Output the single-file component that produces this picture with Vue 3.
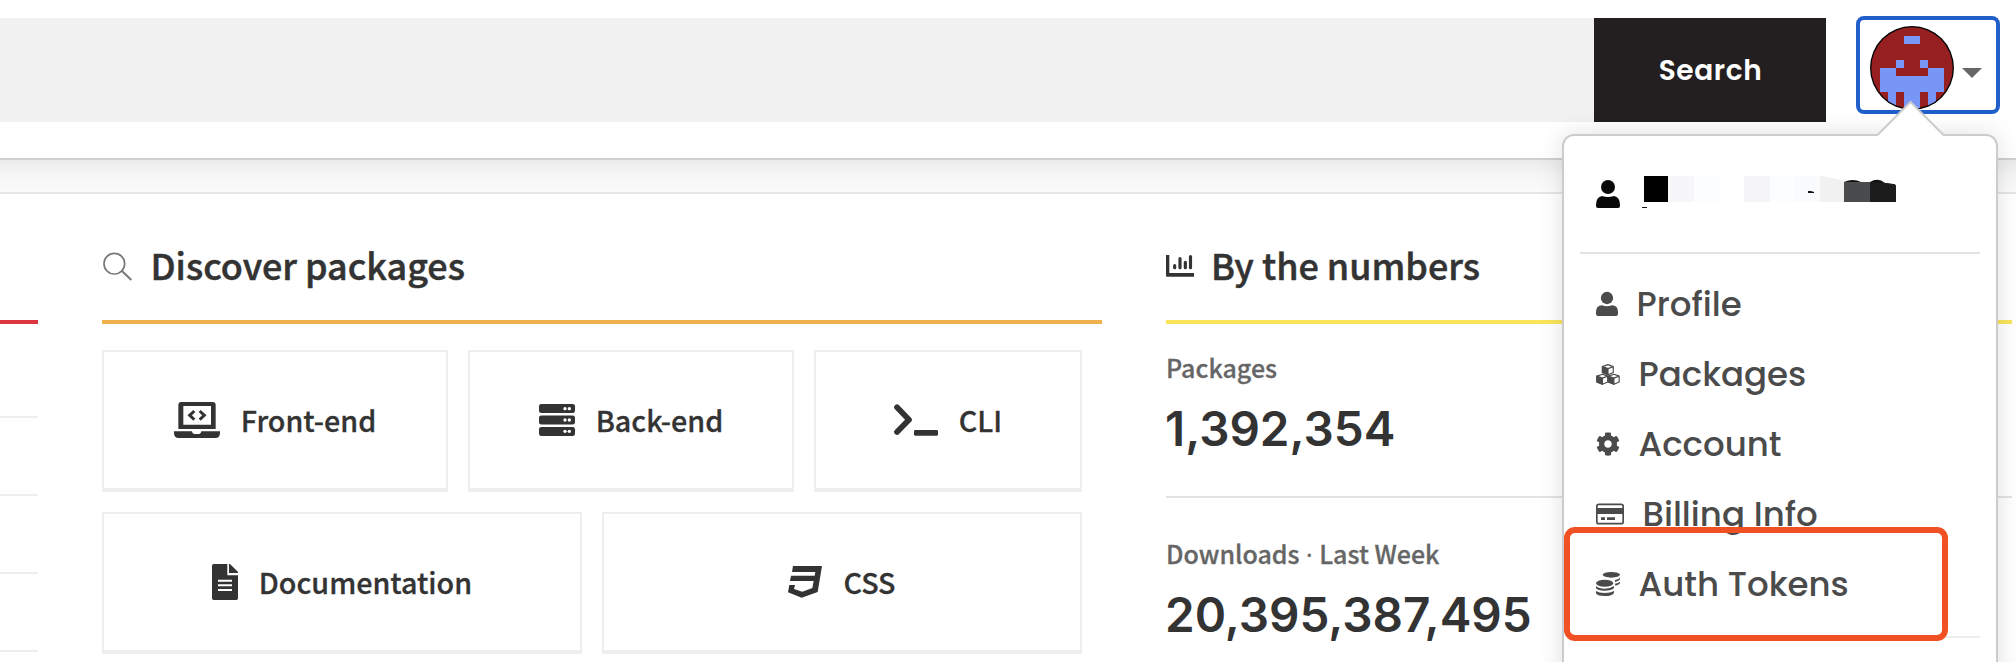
<script setup>
const cardRows = [
  [
    { label: 'Front-end', icon: 'laptop', cls: 'w-front' },
    { label: 'Back-end', icon: 'server', cls: 'w-back' },
    { label: 'CLI', icon: 'terminal', cls: 'w-cli' },
  ],
  [
    { label: 'Documentation', icon: 'doc', cls: 'w-half' },
    { label: 'CSS', icon: 'css', cls: 'w-half' },
  ],
]
const stats = [
  { label: 'Packages', value: '1,392,354' },
  { label: 'Downloads', period: 'Last Week', value: '20,395,387,495' },
]
const menu = [
  { label: 'Profile', icon: 'user' },
  { label: 'Packages', icon: 'cubes' },
  { label: 'Account', icon: 'gear' },
  { label: 'Billing Info', icon: 'card' },
  { label: 'Auth Tokens', icon: 'coins' },
]
const cubes = ['translate(19 1)', 'translate(2 30)', 'translate(37 30)']
</script>

<template>
  <div class="page">
    <header class="topbar">
      <div class="field"></div>
      <button class="search">Search</button>
      <div class="account">
        <svg class="avatar" width="84" height="84" viewBox="0 0 84 84">
          <defs><clipPath id="face"><circle cx="42" cy="42" r="40.7" /></clipPath></defs>
          <circle cx="42" cy="42" r="42" fill="#000" />
          <g clip-path="url(#face)">
            <rect width="84" height="84" fill="#962021" />
            <path fill="#7796f5" d="M34 10h16v8h-16zM26 34h8v8h-8zM50 34h8v8h-8zM10 42h16v8h32v-8h16v24h-8v18h-8v-18h-8v18h-16v-18h-8v18h-8v-18h-8z" />
          </g>
        </svg>
        <svg class="caret" width="20" height="10" viewBox="0 0 20 10"><path d="M0 0h20L10 10z" fill="#666" /></svg>
      </div>
    </header>
    <div class="band"></div>

    <main class="columns">
      <section class="popular">
        <div class="rule red"></div>
        <div v-for="n in 4" :key="n" class="line"></div>
      </section>

      <section class="discover">
        <h2>
          <svg width="29" height="29" viewBox="0 0 87 87" fill="none" stroke="#777" stroke-width="5"><circle cx="34" cy="35" r="31" /><path d="M56 56L85 84" stroke-width="6" /></svg>
          <span>Discover packages</span>
        </h2>
        <div class="rule orange"></div>
        <div v-for="(row, i) in cardRows" :key="i" class="cards">
          <a v-for="c in row" :key="c.label" class="card" :class="c.cls">
            <svg v-if="c.icon === 'laptop'" width="46" height="36" viewBox="0 0 138 108">
              <path fill="#333" fill-rule="evenodd" d="M22 0h94q9 0 9 9v72H13V9q0-9 9-9zM28 12v56h83V12z" />
              <path fill="#333" d="M0 88h54q1 8 6 8h16q5 0 6-8h56v4q0 16-14 16H14Q0 108 0 92z" />
              <path fill="none" stroke="#333" stroke-width="9" d="M61 27L47 40l14 13M77 27l14 13-14 13" />
            </svg>
            <svg v-else-if="c.icon === 'server'" width="36" height="32" viewBox="0 0 108 96">
              <g fill="#333"><rect width="108" height="27" rx="7" /><rect y="34.5" width="108" height="27" rx="7" /><rect y="69" width="108" height="27" rx="7" /></g>
              <g fill="#fff"><circle cx="78" cy="14" r="5" /><circle cx="91" cy="14" r="5" /><circle cx="78" cy="48" r="5" /><circle cx="91" cy="48" r="5" /><circle cx="78" cy="82" r="5" /><circle cx="91" cy="82" r="5" /></g>
            </svg>
            <svg v-else-if="c.icon === 'terminal'" width="44" height="32" viewBox="0 0 132 96">
              <path d="M9 10L45 47 9 84" fill="none" stroke="#333" stroke-width="17" stroke-linecap="round" stroke-linejoin="round" />
              <rect x="60" y="78" width="72" height="17" rx="4" fill="#333" />
            </svg>
            <svg v-else-if="c.icon === 'doc'" width="26" height="36" viewBox="0 0 78 108">
              <path fill="#333" d="M5 0h41v34h32v69q0 5-5 5H5q-5 0-5-5V5q0-5 5-5zM51 0h3l24 24v3H51z" />
              <path stroke="#fff" stroke-width="6" d="M18 50h42M18 64h42M18 78h42" />
            </svg>
            <svg v-else width="34" height="32" viewBox="0 0 102 96">
              <path fill="#333" d="M15 0h87L89 78 41 95 0 79l4-22h17l-3 12 25 8 30-11 4-21H6l3-16h71l2-11H12z" />
            </svg>
            <span>{{ c.label }}</span>
          </a>
        </div>
      </section>

      <section class="numbers">
        <h2>
          <svg width="28" height="22" viewBox="0 0 84 66"><path fill="#333" d="M0 0h10v54h74v11H3q-3 0-3-3z" /><path fill="none" stroke="#333" stroke-width="9.5" stroke-linecap="round" d="M26 32v6M42 11v27M58 22v16M73.500 5v33" /></svg>
          <span>By the numbers</span>
        </h2>
        <div class="rule yellow"></div>
        <div v-for="s in stats" :key="s.label" class="stat">
          <div class="label">{{ s.label }}<template v-if="s.period"><span class="dot"> · </span>{{ s.period }}</template></div>
          <div class="value">{{ s.value }}</div>
        </div>
      </section>
    </main>

    <div class="dropdown">
      <svg class="arrow" width="68" height="37" viewBox="0 0 68 37"><path d="M0 35L33.500 1.500 67 35V37H0z" fill="#fff" /><path d="M0 35.500L33.500 2 67 35.500" fill="none" stroke="#ccc" stroke-width="2" /></svg>
      <div class="who">
        <svg width="24" height="28" viewBox="0 0 24 28" fill="#080808"><circle cx="12" cy="7" r="7" /><path d="M6 16q6 2 12 0 6 1 6 9v1q0 2-2 2H2q-2 0-2-2v-1q0-8 6-9z" /></svg>
        <svg width="254" height="33" viewBox="0 0 254 33">
          <rect x="2" width="24" height="26" fill="#000" /><rect x="26" width="26" height="26" fill="#f7f7fa" /><rect x="52" width="25" height="26" fill="#fcfdff" /><rect x="102" width="26" height="26" fill="#f5f5f7" /><rect x="128" width="24" height="26" fill="#fcfdff" /><rect x="152" width="26" height="26" fill="#fafbfd" />
          <path d="M178 0l8 1 16 4v21h-24z" fill="#f1f1f2" />
          <path d="M202 6q9-4 17 0h9q8-5 15 1l8 1q3 0 3 3v1h-52z" fill="#111" />
          <path d="M202 6h26v20h-26z" fill="#4a4b4d" /><path d="M228 6l15 1 8 1q3 0 3 3v15h-26z" fill="#1c1c1d" />
          <path d="M166 15h3l3 1v1h-6zM0 31h5v1H0z" fill="#111" />
        </svg>
      </div>
      <div class="sep"></div>
      <nav class="menu">
        <a v-for="m in menu" :key="m.label" class="item">
          <svg v-if="m.icon === 'user'" width="22" height="24" viewBox="0 0 66 72"><circle cx="33" cy="18" r="18.500" /><path d="M18 40q15 6 30 0 18 1 18 20v6q0 6-6 6H6q-6 0-6-6v-6q0-19 18-20z" /></svg>
          <svg v-else-if="m.icon === 'cubes'" width="24" height="21" viewBox="0 0 72 64">
            <g v-for="t in cubes" :key="t" :transform="t" stroke="#4b4b4b" stroke-width="3.500" stroke-linejoin="round">
              <path d="M0 7L17 1l16 6v18l-16 7-17-7z" fill="#fff" /><path d="M0 7l17 6v19L0 25z" /><path d="M17 13l16-6" />
            </g>
          </svg>
          <svg v-else-if="m.icon === 'gear'" width="24" height="24" viewBox="0 0 512 512"><path d="M487.400 315.700l-42.600-24.600c4.300-23.200 4.300-47 0-70.200l42.600-24.600c4.900-2.800 7.100-8.600 5.500-14-11.100-35.600-30-67.800-54.700-94.600-3.800-4.100-10-5.100-14.800-2.300L380.800 110c-17.900-15.400-38.500-27.300-60.800-35.100V25.800c0-5.600-3.900-10.500-9.400-11.700-36.700-8.200-74.300-7.800-109.200 0-5.500 1.200-9.400 6.100-9.400 11.700V75c-22.200 7.900-42.800 19.800-60.800 35.100L88.700 85.500c-4.900-2.800-11-1.900-14.800 2.300-24.700 26.700-43.600 58.900-54.700 94.600-1.700 5.400.6 11.200 5.500 14L67.300 221c-4.300 23.200-4.300 47 0 70.200l-42.600 24.600c-4.900 2.800-7.100 8.600-5.500 14 11.100 35.600 30 67.800 54.700 94.600 3.800 4.100 10 5.100 14.800 2.300l42.600-24.600c17.900 15.400 38.500 27.300 60.800 35.100v49.200c0 5.600 3.900 10.500 9.400 11.700 36.700 8.200 74.300 7.800 109.200 0 5.500-1.200 9.400-6.100 9.400-11.700v-49.200c22.200-7.900 42.800-19.800 60.800-35.100l42.600 24.600c4.900 2.800 11 1.900 14.800-2.300 24.700-26.700 43.600-58.900 54.700-94.600 1.500-5.500-.7-11.300-5.600-14.100zM256 336c-44.100 0-80-35.900-80-80s35.900-80 80-80 80 35.900 80 80-35.900 80-80 80z" /></svg>
          <svg v-else-if="m.icon === 'card'" width="28" height="22" viewBox="0 0 84 66"><rect x="2.500" y="4" width="79" height="58" rx="6" fill="none" stroke="#4b4b4b" stroke-width="5" /><path d="M2 15h80v18H2zM15 43h12v8H15zM33 43h24v8H33z" /></svg>
          <svg v-else width="24" height="24" viewBox="0 0 72 72">
            <ellipse cx="46" cy="8.500" rx="26" ry="8.500" />
            <path d="M57 24q10-1 15-7v5q-5 6-15 8zM57 35q10-1 15-6v5q-4 5-14 7z" />
            <ellipse cx="26" cy="34" rx="26" ry="10.500" />
            <path d="M0 42q9 8 26 8t28-8v6q-7 8-28 8T0 49zM0 57q9 6 26 6t28-6v5q-4 10-28 10T0 63z" />
          </svg>
          <span>{{ m.label }}</span>
        </a>
      </nav>
      <div class="sep light"></div>
    </div>
    <div class="highlight"></div>
  </div>
</template>

<style>
body { margin: 0; overflow: hidden; }
</style>
<style scoped>
.page { position: relative; width: 2016px; height: 662px; overflow: hidden; background: #fff; color: #333; font-family: "Noto Sans CJK SC", sans-serif; font-weight: 500; }
.page * { box-sizing: border-box; }
svg { display: block; flex: none; overflow: visible; }
.topbar { display: flex; height: 160px; padding-top: 16px; border-bottom: 2px solid #cfcfcf; background: #fff; }
.field { width: 1594px; height: 104px; margin-top: 2px; background: #f1f1f1; }
.search { width: 232px; height: 104px; margin-top: 2px; padding: 2px 0 0 1px; border: 0; background: #231f20; color: #fff; font: 600 28px/102px Poppins, "Open Sans", sans-serif; letter-spacing: .6px; }
.account { display: flex; width: 144px; height: 98px; margin-left: 30px; padding-left: 10px; border: 4px solid #205fc9; border-radius: 8px; }
.avatar { margin-top: 6px; }
.caret { margin: 48px 0 0 8px; }
.band { height: 34px; border-bottom: 2px solid #e5e5e5; background: linear-gradient(#ebebeb, #f6f6f6 50%, #fbfbfb); }
.columns { display: flex; }
.popular { width: 38px; padding-top: 126px; }
.line { height: 2px; margin-bottom: 76px; background: #eee; }
.popular .rule { margin-bottom: 92px; }
.discover { width: 1000px; margin-left: 64px; }
.numbers { width: 846px; margin-left: 64px; }
.rule { height: 4px; }
.red { background: #dc3640; }
.orange { background: #efb14b; }
.yellow { background: #fae55a; }
h2 { display: flex; height: 126px; margin: 0; font-size: 35.9px; font-weight: 500; line-height: 50px; white-space: nowrap; -webkit-text-stroke: .5px #333; }
h2 span { margin-top: 45px; }
.discover h2 svg { margin: 58px 18.5px 0 1px; }
.numbers h2 svg { margin: 61px 17px 0 0; }
.cards { display: flex; gap: 20px; margin-top: 20px; }
.rule + .cards { margin-top: 26px; }
.card { display: flex; align-items: center; justify-content: center; gap: 21px; height: 142px; border: 2px solid #eee; border-bottom-width: 4px; font-size: 28.7px; line-height: 40px; white-space: nowrap; -webkit-text-stroke: .3px #333; }
.w-front { width: 346px; }
.w-back { width: 326px; }
.w-cli { width: 268px; }
.w-half { width: 480px; }
.stat { height: 186px; border-bottom: 2px solid #e3e3e3; }
.rule + .stat { height: 174px; }
.label { height: 36px; padding-top: 37px; box-sizing: content-box; font-size: 25px; line-height: 36px; color: #666; -webkit-text-stroke: .3px #666; white-space: pre; }
.rule + .stat .label { padding-top: 25px; }
.dot { font-family: "Open Sans", sans-serif; }
.value { margin: 16px 0 0 -1px; font: 600 47.6px/56px Inter, sans-serif; }
.dropdown { position: absolute; left: 1562px; top: 134px; width: 436px; height: 560px; padding: 0 16px; border: 2px solid #ccc; border-radius: 12px; background: #fff; box-shadow: 0 0 24px rgba(0, 0, 0, .12); }
.arrow { position: absolute; left: 312.5px; top: -36px; }
.who { display: flex; height: 116px; padding: 40px 16px 0; }
.who svg:first-child { margin: 4px 22px 0 0; }
.sep { height: 2px; background: #e3e3e3; }
.menu { padding-top: 15px; }
.sep.light { margin-top: 17px; background: #eee; }
.item { display: flex; align-items: center; height: 70px; padding-left: 16px; gap: 18.5px; color: #4b4b4b; font: 500 34px/70px Poppins, "Open Sans", sans-serif; white-space: nowrap; }
.item svg { fill: #4b4b4b; }
.highlight { position: absolute; left: 1564px; top: 527px; width: 384px; height: 114px; border: 6px solid #f05024; border-radius: 11px; }
</style>
